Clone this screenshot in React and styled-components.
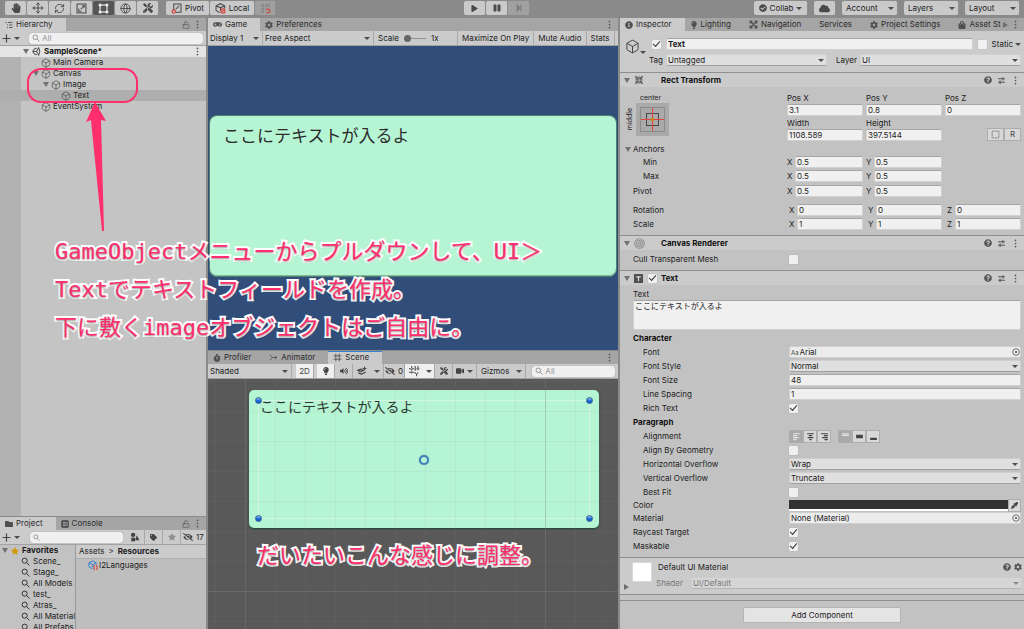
import React, { useId } from "react";
import styled, { createGlobalStyle, css } from "styled-components";
import { Box, Move, LockOpen, Globe, RefreshCw } from "lucide-react";
import {
  FaHandPaper, FaTools, FaPlay, FaPause, FaStepForward, FaCheckCircle, FaCloud,
  FaGamepad, FaCog, FaInfoCircle, FaLightbulb, FaShoppingBag, FaQuestionCircle,
  FaFolder, FaStar, FaTag, FaVolumeUp, FaVideo, FaEyeDropper, FaEyeSlash, FaStopwatch,
} from "react-icons/fa";

const GlobalStyle = createGlobalStyle`
  * { box-sizing: border-box; }
  body { margin: 0; background: #8a8a8a; }
  body, button, input, select, textarea {
    font-family: Inter, "Noto Sans CJK JP", sans-serif;
    font-size: 8px;
    line-height: 11px;
    color: #1c1c1c;
  }
  button, input, select, textarea { margin: 0; padding: 0; border: 0; border-radius: 0; outline: 0; }
  svg { display: block; flex: none; }
`;

/* ---------- icons ---------- */

const Svg = ({ size = 10, children, ...rest }) => (
  <svg width={size} height={size} viewBox="0 0 16 16" fill="none" stroke="currentColor" strokeWidth="1.5" aria-hidden="true" {...rest}>
    {children}
  </svg>
);
const ScaleIcon = () => <Svg size={11}><rect x="1.5" y="1.5" width="13" height="13" /><path d="M4 8v4h4M7 9l5-5M9 4h3v3" /></Svg>;
const RectIcon = () => (
  <Svg size={11}>
    <rect x="3" y="3" width="10" height="10" />
    <g fill="currentColor" stroke="none"><circle cx="3" cy="3" r="2.2" /><circle cx="13" cy="3" r="2.2" /><circle cx="3" cy="13" r="2.2" /><circle cx="13" cy="13" r="2.2" /></g>
  </Svg>
);
const PivotIcon = () => <Svg size={11}><path d="M4 10V1.5h10.500v12H7M7 9l5-5" /><circle cx="4" cy="12.500" r="2.500" stroke="#d0362f" /></Svg>;
const LocalIcon = () => <Svg size={11}><path d="M7 14l-5.500-3V4L8 1l6 3v4M1.500 4L8 7l6-3M8 7v4" /><circle cx="11.500" cy="11.500" r="3" stroke="#d0362f" /><path d="M10 13l3-3" stroke="#d0362f" /></Svg>;
const SnapIcon = () => <Svg size={11}><path d="M1 4h13M1 9h7M4 1v13M9 1v6M13 1v5M1 13h6" strokeDasharray="2 1" /><path d="M9 9h3a2 2 0 010 5H9" stroke="#c0504a" strokeWidth="2" /></Svg>;
const ListIcon = () => <Svg size={8}><path d="M1 3h3M6 3h9M4 8h2M8 8h7M4 13h2M8 13h7" strokeWidth="1.800" /></Svg>;
const UnityIcon = () => <Svg size={9}><path d="M1 8l4-5 4-1M1 8l4 5 4 1M1 8h7M8 8l4-6.500 2 6.500-2 6.500zM14 8l-2-6" strokeWidth="1.800" /></Svg>;
const KebabIcon = () => <Svg size={9}><g fill="currentColor" stroke="none"><circle cx="8" cy="2.500" r="1.500" /><circle cx="8" cy="8" r="1.500" /><circle cx="8" cy="13.500" r="1.500" /></g></Svg>;
const SearchIcon = ({ size = 8 }) => <Svg size={size}><circle cx="6.500" cy="6.500" r="4.500" /><path d="M10 10l5 5" /></Svg>;
const PresetIcon = () => <Svg size={9} strokeWidth="1.900"><path d="M2 5h12M2 11h12M10.500 2v6M5.500 8v6" /></Svg>;
const CrossArrowsIcon = () => (
  <Svg size={10} strokeWidth="1.800">
    <path d="M2 2l4 4M14 2l-4 4M2 14l4-4M14 14l-4-4" />
    <path d="M2.500 6.500h4v-4M9.500 2.500v4h4M2.500 9.500h4v4M13.500 9.500h-4v4" />
  </Svg>
);
const NavIcon = () => <Svg size={9}><path d="M3 3l10 10M13 3L3 13" strokeWidth="2" /><g fill="currentColor" stroke="none"><rect x="1" y="1" width="5" height="5" /><rect x="10" y="1" width="5" height="5" /><rect x="1" y="10" width="5" height="5" /><rect x="10" y="10" width="5" height="5" /></g></Svg>;
const RingsIcon = () => <Svg size={11} stroke="#909090"><circle cx="8" cy="8" r="7" /><circle cx="8" cy="8" r="4.300" /><circle cx="8" cy="8" r="1.700" /></Svg>;
const ConsoleIcon = () => <Svg size={8}><rect x="1" y="1" width="14" height="14" rx="2" fill="currentColor" /><path d="M4 5h6M4 8h5M4 11h6M12 4v8" stroke="#b5b5b5" /></Svg>;
const AnimatorIcon = () => <Svg size={9}><path d="M1 3l5 5-5 5M6 8h8M11 5.500L14 8l-3 2.500" /></Svg>;
const GridIcon = () => <Svg size={9}><path d="M5 1v14M11 1v14M1 5h14M1 11h14" /></Svg>;
const SnapGridIcon = () => <Svg size={11}><path d="M4 0v12M0 4h16M9 0v7M13 0v6M0 9h8M8 9l3 3 3-3M11 12v4" strokeDasharray="3 1" /></Svg>;
const EffectsIcon = () => (
  <Svg size={10}>
    <path d="M1 7l5-2 4 2-4 2zM2 11l5 2 7-3" strokeWidth="2" />
    <path d="M12 1v6M9 4h6" strokeWidth="1.800" />
  </Svg>
);
const ShapesIcon = () => <Svg size={10} fill="currentColor" stroke="none"><circle cx="5" cy="4.500" r="3.500" /><path d="M11 5l4 8H8z" /><rect x="2" y="9" width="6" height="6" /></Svg>;
const TargetIcon = () => <Svg size={8}><circle cx="8" cy="8" r="6.500" /><circle cx="8" cy="8" r="2" fill="currentColor" stroke="none" /></Svg>;
const AssetIcon = () => <Svg size={10}><path d="M7 14l-5.500-3V4.500L7.500 1.500l5.500 3v3M1.500 4.500l6 3 5.500-3M7.500 7.500V12" stroke="#2f80d0" /><path d="M11 9H9.500v6H11M13 9h1.500v6H13" stroke="#d0362f" /></Svg>;
const DashedRectIcon = () => <Svg size={9}><rect x="2" y="2" width="12" height="12" strokeDasharray="2 2" /></Svg>;
const AlignIcon = ({ d }) => <Svg size={9} strokeWidth="2"><path d={d} /></Svg>;
const AnchorIcon = () => (
  <svg width="33" height="33" viewBox="0 0 33 33" fill="none" aria-hidden="true">
    <rect width="33" height="33" fill="#a9a9a9" />
    <rect x="4.500" y="4.500" width="24" height="24" stroke="#8b8b8b" />
    <rect x="10.500" y="10.500" width="12" height="12" stroke="#4a4a4a" />
    <path d="M16.500 5v23M5 16.500h23" stroke="#e0453d" />
    <rect x="15" y="15" width="3" height="3" fill="#c78a1c" />
  </svg>
);

/* ---------- shared controls ---------- */

const Triangle = styled.span`
  display: block;
  flex: none;
  width: 0;
  height: 0;
  border: 3px solid transparent;
  ${(p) => p.$right
    ? css`border-left: 5px solid ${p.$color || "#6e6e6e"}; border-right-width: 0;`
    : css`border-top: ${p.$big ? 5 : 3}px solid ${p.$color || "#4c4c4c"}; border-bottom-width: 0;`}
`;

const TextInput = styled.input`
  display: block;
  flex: 1;
  width: 100%;
  min-width: 0;
  height: 12px;
  padding: 0 1px;
  background: #f0f0f0;
  border-radius: 2px;
  border: 1px solid #d0d0d0;
  border-top-color: #a6a6a6;
  line-height: 10px;
  font-weight: ${(p) => (p.$bold ? 700 : 400)};
`;

const SelectBox = styled.span`
  display: grid;
  flex: 1;
  min-width: 0;
  align-items: center;
  opacity: ${(p) => (p.$faded ? 0.5 : 1)};
  > * { grid-area: 1 / 1; }
  > ${Triangle} { justify-self: end; margin-right: 3px; pointer-events: none; }
`;
const SelectControl = styled.select`
  appearance: none;
  width: 100%;
  height: 12px;
  padding: 0 1px;
  line-height: 10px;
  background: #dfdfdf;
  border: 1px solid #cfcfcf;
  border-bottom-color: #a0a0a0;
  border-radius: 2px;
  opacity: 1;
  ${(p) => p.$flat && css`background: transparent; border-color: transparent;`}
`;
const Select = ({ id, value, label, flat, faded }) => (
  <SelectBox $faded={faded}>
    <SelectControl id={id} aria-label={label} $flat={flat} defaultValue={value}><option>{value}</option></SelectControl>
    <Triangle />
  </SelectBox>
);

const CheckBox = styled.input.attrs({ type: "checkbox" })`
  appearance: none;
  flex: none;
  display: grid;
  place-items: center;
  width: 9px;
  height: 9px;
  background: #f0f0f0;
  border-radius: 1px;
  box-shadow: 0 0 1px #8c8c8c;
  &:checked::before {
    content: "";
    width: 6px;
    height: 3px;
    margin-bottom: 2px;
    border: solid #333;
    border-width: 0 0 1px 1px;
    transform: rotate(-48deg);
  }
`;

const SearchField = styled.label`
  display: flex;
  align-items: center;
  gap: 2px;
  flex: 1;
  min-width: 0;
  height: 11px;
  margin: 0 3px;
  padding: 0 3px;
  background: #f0f0f0;
  border-radius: 3px;
  box-shadow: 0 0 1px #777;
  color: #777;
  input { flex: 1; min-width: 0; background: none; height: 11px; }
  input::placeholder { color: #9a9a9a; }
`;

const IconButton = styled.button`
  display: inline-flex;
  align-items: center;
  justify-content: center;
  gap: 3px;
  flex: none;
  width: ${(p) => (p.$w ? `${p.$w}px` : "auto")};
  height: 14px;
  padding: 0;
  background: ${(p) => (p.$on ? "#efefef" : "transparent")};
  color: ${(p) => (p.$dim ? "#8f8f8f" : "#444")};
  white-space: nowrap;
  ${(p) => p.$line && css`border-right: 1px solid #a9a9a9;`}
`;
const TextButton = styled(IconButton)`
  padding: 0 4px;
  color: #1c1c1c;
`;

/* ---------- window frame ---------- */

const Shell = styled.div`
  position: relative;
  display: flex;
  flex-direction: column;
  min-width: 900px;
  height: 100vh;
  overflow: hidden;
  background: #8a8a8a;
`;
const TopBar = styled.header`
  display: grid;
  grid-template-columns: 464fr auto 494fr;
  align-items: center;
  height: 18px;
  padding-bottom: 2px;
`;
const Group = styled.div`
  display: flex;
  gap: ${(p) => p.$gap || 0}px;
  justify-content: ${(p) => (p.$end ? "flex-end" : "flex-start")};
  padding: ${(p) => p.$pad || 0};
`;
const BarButton = styled(IconButton)`
  background: ${(p) => (p.$active ? "#565656" : p.$dim ? "#a0a0a0" : "#c9c9c9")};
  color: ${(p) => (p.$active ? "#f4f4f4" : p.$dim ? "#7d7d7d" : "#4a4a4a")};
  border-right: 1px solid #8f8f8f;
  border-radius: 2px;
`;
const BarText = styled.span`color: #1c1c1c;`;

const Workspace = styled.main`
  display: grid;
  grid-template-columns: 206px minmax(0, 1fr) 404px;
  gap: 2px;
  flex: 1;
  min-height: 0;
`;
const Column = styled.div`
  display: flex;
  flex-direction: column;
  min-width: 0;
  min-height: 0;
`;
const Panel = styled.section`
  display: flex;
  flex-direction: column;
  flex: ${(p) => p.$flex || "1 1 0"};
  min-height: 0;
  overflow: hidden;
  background: #c2c2c2;
`;
const TabBar = styled.div`
  display: flex;
  flex: none;
  height: 13px;
  background: #a5a5a5;
`;
const Tabs = styled.div`
  display: flex;
  flex: 1;
  min-width: 0;
  overflow: hidden;
`;
const Tab = styled.button`
  display: flex;
  align-items: center;
  gap: 3px;
  flex: none;
  height: 13px;
  padding: 0 13px 0 5px;
  color: #2a2a2a;
  background: ${(p) => (p.$active ? "#cbcbcb" : "transparent")};
  box-shadow: ${(p) => (p.$focus ? "inset 0 1px 0 #3d7fd0" : "none")};
  svg { color: #505050; }
`;
const TabTools = styled.div`
  display: flex;
  align-items: center;
  gap: 3px;
  padding: 0 4px 0 2px;
  color: #555;
`;
const Toolbar = styled.div`
  display: flex;
  align-items: center;
  flex: none;
  height: 15px;
  overflow: hidden;
  background: #cbcbcb;
  border-bottom: 1px solid #a2a2a2;
`;

/* ---------- hierarchy ---------- */

const Tree = styled.ul`
  flex: 1;
  margin: 0;
  padding: 0;
  list-style: none;
  background: linear-gradient(90deg, #b2b2b2 21px, #c4c4c4 21px);
`;
const TreeRow = styled.li`
  display: flex;
  align-items: center;
  gap: ${(p) => (p.$scene ? 3 : 2)}px;
  height: 11px;
  padding: 0 4px 0 ${(p) => p.$depth * 10 + 23}px;
  background: ${(p) => (p.$selected ? "#aeaeae" : p.$scene ? "#e4e4e4" : "transparent")};
  font-weight: ${(p) => (p.$scene ? 700 : 400)};
  color: ${(p) => (p.$scene ? "#111" : "#222")};
  svg { color: #555; }
`;
const Fold = styled.span`
  display: flex;
  flex: none;
  width: 6px;
`;
const Spring = styled.span`flex: 1;`;

/* ---------- project ---------- */

const Browser = styled.div`
  display: grid;
  grid-template-columns: 75px minmax(0, 1fr);
  gap: 1px;
  flex: 1;
  min-height: 0;
  background: #9a9a9a;
`;
const Favorites = styled.ul`
  margin: 0;
  padding: 0;
  list-style: none;
  overflow: hidden;
  background: #c2c2c2;
`;
const FavoriteRow = styled.li`
  display: flex;
  align-items: center;
  gap: 3px;
  height: 11px;
  padding-left: ${(p) => (p.$head ? 2 : 21)}px;
  font-weight: ${(p) => (p.$head ? 700 : 400)};
  white-space: nowrap;
`;
const Contents = styled.div`background: #bebebe;`;
const Crumbs = styled.nav`
  display: flex;
  gap: 4px;
  height: 14px;
  padding: 1px 3px;
  background: #cbcbcb;
  border-bottom: 1px solid #b0b0b0;
  a { color: inherit; text-decoration: none; }
  b { font-weight: 700; }
`;
const AssetRow = styled.div`
  display: flex;
  align-items: center;
  gap: 1px;
  height: 12px;
  padding-left: 12px;
`;

/* ---------- game and scene ---------- */

const ScaleSlider = styled.input.attrs({ type: "range" })`
  appearance: none;
  width: 22px;
  height: 9px;
  margin: 0 5px;
  background: linear-gradient(#909090, #909090) center / 100% 1px no-repeat;
  &::-webkit-slider-thumb {
    appearance: none;
    width: 7px;
    height: 7px;
    border-radius: 50%;
    background: #666;
  }
`;
const Cell = styled.label`
  display: flex;
  align-items: center;
  flex: none;
  width: ${(p) => p.$w}px;
  height: 14px;
  padding-left: ${(p) => p.$pad || 0}px;
  border-right: 1px solid #a9a9a9;
`;
const GameView = styled.div`
  flex: 1;
  padding: 70px 2px 0;
  background: #314d79;
`;
const GameCard = styled.div`
  height: 160px;
  padding: 10px 13px;
  border-radius: 7px;
  background: #b6f5d4;
  box-shadow: 0 0 0 1px #4d806f, inset 0 -1px 0 #7fb79b;
  font-size: 17px;
  line-height: 20px;
  color: #2c2c2c;
`;
const SceneView = styled.div`
  position: relative;
  flex: 1;
  padding: 11px 19px 0 41px;
  background: #595959;
  &::after {
    content: "";
    position: absolute;
    inset: 0;
    pointer-events: none;
    background:
      linear-gradient(90deg, rgba(130, 130, 130, 0.3) 1px, transparent 1px) 37px 0 / 300px 100%,
      linear-gradient(rgba(130, 130, 130, 0.3) 1px, transparent 1px) 0 212px / 100% 300px,
      linear-gradient(90deg, rgba(130, 130, 130, 0.1) 1px, transparent 1px) 7px 0 / 30px 100%,
      linear-gradient(rgba(130, 130, 130, 0.1) 1px, transparent 1px) 0 2px / 100% 30px;
  }
`;
const SceneCard = styled.div`
  position: relative;
  height: 138px;
  padding: 8px 11px;
  border-radius: 5px;
  background: #b6f5d4;
  box-shadow: 0 1px 2px #1f4436;
  font-size: 14px;
  line-height: 18px;
  color: #2b3831;
`;
const RectFrame = styled.div`
  position: absolute;
  inset: 10px 9px 9px 9px;
  border: 1px solid #d6f5e2;
`;
const Handle = styled.i`
  position: absolute;
  width: 7px;
  height: 7px;
  border-radius: 50%;
  border: 1px solid #2f5f94;
  background: linear-gradient(#8fc3f5, #1560d8 60%);
  ${(p) => (p.$bottom ? "bottom: -4px;" : "top: -4px;")}
  ${(p) => (p.$right ? "right: -4px;" : "left: -4px;")}
`;
const PivotRing = styled.i`
  position: absolute;
  top: 50%;
  left: 50%;
  width: 10px;
  height: 10px;
  margin: -5px;
  border-radius: 50%;
  border: 2px solid #3f7dbb;
  box-shadow: 0 0 1px #2f5f94;
`;

/* ---------- inspector ---------- */

const ObjectHeader = styled.div`
  display: grid;
  grid-template-columns: 24px minmax(0, 1fr);
  height: 41px;
  padding: 5px 3px 0 5px;
  background: #cbcbcb;
`;
const ObjectIcon = styled.div`
  display: flex;
  align-items: flex-end;
  height: 18px;
  color: #444;
`;
const HeaderRows = styled.div`
  display: flex;
  flex-direction: column;
`;
const HeaderRow = styled.div`
  display: flex;
  align-items: center;
  gap: ${(p) => p.$gap}px;
  height: 16px;
  padding-left: ${(p) => p.$pad || 0}px;
`;
const Caption = styled.label`
  flex: none;
  opacity: ${(p) => (p.$faded ? 0.5 : 1)};
`;
const ComponentHead = styled.div`
  display: flex;
  align-items: center;
  gap: 4px;
  height: 15px;
  padding: 0 4px;
  background: #cbcbcb;
  border-top: 1px solid #8f8f8f;
  h2 { flex: 1; margin: 0; font-size: 8px; line-height: 11px; font-weight: 700; color: #111; }
`;
const Marks = styled.span`
  display: flex;
  align-items: center;
  gap: 5px;
  width: 23px;
  color: #555;
`;
const HeadTools = styled.span`
  display: flex;
  align-items: center;
  gap: 5px;
  color: #555;
`;
const Body = styled.div`padding: ${(p) => p.$pad}; `;
const TransformTop = styled.div`
  display: grid;
  grid-template-columns: 154px minmax(0, 1fr);
  height: 50px;
`;
const AnchorPreset = styled.div`
  display: grid;
  grid-template-columns: 33px;
  align-content: start;
  margin-left: 1px;
  font-size: 7px;
  line-height: 10px;
  text-align: center;
`;
const AnchorBox = styled.div`
  display: flex;
  align-items: center;
  gap: 1px;
  margin-left: -9px;
`;
const SideText = styled.span`
  writing-mode: vertical-rl;
  transform: rotate(180deg);
`;
const Vectors = styled.div`
  display: grid;
  grid-template-columns: repeat(3, minmax(0, 1fr));
  gap: 0 ${(p) => p.$gap}px;
  flex: 1;
  align-content: start;
`;
const Stacked = styled.label`
  display: block;
  height: 25px;
`;
const Axis = styled.label`
  display: flex;
  align-items: center;
  gap: 2px;
`;
const AxisName = styled.span`flex: none; width: 6px;`;
const SmallButtons = styled.div`
  display: flex;
  justify-content: flex-end;
  align-self: center;
  padding-top: 8px;
`;
const SmallButton = styled.button`
  display: grid;
  place-items: center;
  width: ${(p) => p.$w || 17}px;
  height: 13px;
  background: ${(p) => (p.$on ? "#a9a9a9" : "#d8d8d8")};
  color: ${(p) => (p.$on ? "#e4e4e4" : "#444")};
  border: 1px solid #adadad;
`;
const Row = styled.div`
  display: flex;
  align-items: center;
  height: ${(p) => (p.$tight ? 12 : 14)}px;
  padding-left: ${(p) => (p.$indent ? 10 : 0)}px;
`;
const RowLabel = styled.label`
  flex: none;
  width: ${(p) => p.$w}px;
`;
const Title = styled.h3`
  margin: 0;
  font-size: 8px;
  line-height: 14px;
  font-weight: 700;
  color: #111;
`;
const FoldTitle = styled.div`
  display: flex;
  align-items: center;
  gap: 2px;
  height: 12px;
  margin-left: -8px;
`;
const Gap = styled.div`flex: none; height: ${(p) => p.$h}px;`;
const TextBox = styled.textarea`
  display: block;
  width: 100%;
  height: 30px;
  margin-bottom: 1px;
  padding: 0 1px;
  resize: none;
  background: #f0f0f0;
  border: 1px solid #d0d0d0;
  border-top-color: #a6a6a6;
  border-radius: 2px;
`;
const ObjectField = styled.div`
  display: flex;
  align-items: center;
  gap: 1px;
  flex: 1;
  height: 12px;
  padding: 0 0 0 1px;
  background: #ececec;
  border: 1px solid #cfcfcf;
  border-radius: 2px;
  color: #444;
  small { font-size: 6px; }
  input { flex: 1; min-width: 0; background: none; }
`;
const ColorButton = styled.button`
  flex: 1;
  height: 11px;
  background: #323232;
  border-bottom: 2px solid #fff;
`;
const MaterialHead = styled.div`
  display: grid;
  grid-template-columns: 32px minmax(0, 1fr);
  height: 38px;
  padding: 1px 2px 0 4px;
  background: #cbcbcb;
  border-top: 1px solid #8f8f8f;
  border-bottom: 1px solid #8f8f8f;
`;
const Swatch = styled.div`
  width: 20px;
  height: 20px;
  margin: 3px 0 2px 8px;
  background: #fff;
  border: 1px solid #d9d9d9;
`;
const AddRow = styled.div`
  flex: 1;
  margin-top: 5px;
  padding-top: 6px;
  border-top: 1px solid #8f8f8f;
  text-align: center;
`;
const AddButton = styled.button`
  width: 158px;
  height: 16px;
  background: #e4e4e4;
  border: 1px solid #b4b4b4;
  border-radius: 2px;
`;

/* ---------- annotations ---------- */

const Markup = styled.svg`
  position: absolute;
  top: 66px;
  left: 26px;
  pointer-events: none;
`;
const Note = styled.p`
  position: absolute;
  top: ${(p) => p.$top}px;
  left: ${(p) => p.$left}px;
  margin: 0;
  font-family: "DejaVu Sans Mono", "Noto Sans CJK JP", monospace;
  font-size: 22px;
  font-weight: 400;
  line-height: 38px;
  white-space: nowrap;
  color: #ff2e6c;
  -webkit-text-stroke: 4px #fff;
  paint-order: stroke fill;
  text-shadow: 0 1px 2px rgba(0, 0, 0, 0.45);
  pointer-events: none;
`;

/* ---------- pieces ---------- */

const Cube = ({ size = 10 }) => <Box size={size} strokeWidth={1.8} />;

const TreeItem = ({ depth, open, selected, children }) => (
  <TreeRow $depth={depth} $selected={selected}>
    <Fold>{open && <Triangle $big $color="#707070" />}</Fold>
    <Cube />
    {children}
  </TreeRow>
);

const ComponentTitle = ({ mark, children }) => (
  <ComponentHead>
    <Triangle $big $color="#707070" />
    <Marks>{mark}</Marks>
    <h2>{children}</h2>
    <HeadTools><FaQuestionCircle size={8} /><PresetIcon /><KebabIcon /></HeadTools>
  </ComponentHead>
);

const VectorRow = ({ name, values, indent, wide }) => (
  <Row $indent={indent}>
    <RowLabel as="span" $w={(wide ? 156 : 154) - (indent ? 10 : 0)}>{name}</RowLabel>
    <Vectors $gap={wide ? 5 : 3}>
      {values.map((v, i) => (
        <Axis key={i}><AxisName>{"XYZ"[i]}</AxisName><TextInput defaultValue={v} /></Axis>
      ))}
    </Vectors>
  </Row>
);

const Field = ({ name, indent, type, value }) => {
  const id = useId();
  return (
    <Row $indent={indent} $tight={type === "color"}>
      <RowLabel htmlFor={id} $w={indent ? 146 : 156}>{name}</RowLabel>
      {type === "check" && <CheckBox id={id} defaultChecked={value} />}
      {type === "text" && <TextInput id={id} defaultValue={value} />}
      {type === "select" && <Select id={id} value={value} />}
      {type === "object" && (
        <ObjectField>
          {name === "Font" && <small>Aa</small>}
          <input id={id} defaultValue={value} />
          <TargetIcon />
        </ObjectField>
      )}
      {type === "color" && <><ColorButton id={id} /><SmallButton $w={13} aria-label="Pick color"><FaEyeDropper size={7} /></SmallButton></>}
    </Row>
  );
};

const ALIGN = [
  ["Left", "M2 3h12M2 6.500h7M2 10h10M2 13.500h6"],
  ["Center", "M2 3h12M5 6.500h6M3 10h10M6 13.500h4"],
  ["Right", "M2 3h12M7 6.500h7M4 10h10M8 13.500h6"],
];
const VALIGN = [
  ["Top", "M2 3h12M2 6h12"],
  ["Middle", "M2 6h12M2 8h12M2 10h12"],
  ["Bottom", "M2 11h12M2 13h12"],
];

const TOOLS = [
  ["Hand", <FaHandPaper size={10} />], ["Move", <Move size={12} />], ["Rotate", <RefreshCw size={11} />],
  ["Scale", <ScaleIcon />], ["Rect", <RectIcon />], ["Transform", <Globe size={11} />], ["Custom", <FaTools size={10} />],
];

const WideBarButton = styled(BarButton)`
  justify-content: space-between;
  padding: 0 3px 0 4px;
`;
const SelectBar = ({ w, children }) => <WideBarButton $w={w}><BarText>{children}</BarText><Triangle /></WideBarButton>;

const Top = () => (
  <TopBar>
    <Group $gap={7} $pad="0 0 0 5px">
      <Group>
        {TOOLS.map(([n, icon]) => <BarButton key={n} $w={22} $active={n === "Rect"} aria-label={n}>{icon}</BarButton>)}
      </Group>
      <Group>
        <BarButton $w={44}><PivotIcon /><BarText>Pivot</BarText></BarButton>
        <BarButton $w={45}><LocalIcon /><BarText>Local</BarText></BarButton>
        <BarButton $w={21} $dim aria-label="Snap"><SnapIcon /></BarButton>
      </Group>
    </Group>
    <Group>
      <BarButton $w={22} aria-label="Play"><FaPlay size={7} /></BarButton>
      <BarButton $w={22} aria-label="Pause"><FaPause size={8} /></BarButton>
      <BarButton $w={22} $dim aria-label="Step"><FaStepForward size={8} /></BarButton>
    </Group>
    <Group $gap={6} $end $pad="0 4px 0 0">
      <BarButton $w={54}><FaCheckCircle size={8} /><BarText>Collab</BarText><Triangle /></BarButton>
      <BarButton $w={22} aria-label="Cloud"><FaCloud size={11} /></BarButton>
      <SelectBar w={56}>Account</SelectBar>
      <SelectBar w={55}>Layers</SelectBar>
      <SelectBar w={55}>Layout</SelectBar>
    </Group>
  </TopBar>
);

const AddMenu = () => <IconButton $w={22} aria-label="Create"><Svg size={9} strokeWidth="2"><path d="M8 1v14M1 8h14" /></Svg><Triangle /></IconButton>;

const Hierarchy = () => (
  <Panel>
    <TabBar>
      <Tabs><Tab $active><ListIcon />Hierarchy</Tab></Tabs>
      <TabTools><LockOpen size={8} /><KebabIcon /></TabTools>
    </TabBar>
    <Toolbar>
      <AddMenu />
      <Group $pad="0 0 0 4px" />
      <SearchField><SearchIcon /><input placeholder="All" aria-label="Search hierarchy" /></SearchField>
    </Toolbar>
    <Tree>
      <TreeRow $depth={0} $scene>
        <Triangle $big $color="#707070" /><UnityIcon />SampleScene*<Spring /><KebabIcon />
      </TreeRow>
      <TreeItem depth={1}>Main Camera</TreeItem>
      <TreeItem depth={1} open>Canvas</TreeItem>
      <TreeItem depth={2} open>Image</TreeItem>
      <TreeItem depth={3} selected>Text</TreeItem>
      <TreeItem depth={1}>EventSystem</TreeItem>
    </Tree>
  </Panel>
);

const Project = () => (
  <Panel $flex="0 0 112px">
    <TabBar>
      <Tabs>
        <Tab $active><FaFolder size={8} />Project</Tab>
        <Tab><ConsoleIcon />Console</Tab>
      </Tabs>
      <TabTools><LockOpen size={8} /><KebabIcon /></TabTools>
    </TabBar>
    <Toolbar>
      <AddMenu />
      <Group $pad="0 0 0 5px" />
      <SearchField><SearchIcon size={7} /><input aria-label="Search project" /></SearchField>
      <IconButton $w={19} $line aria-label="By type"><ShapesIcon /></IconButton>
      <IconButton $w={18} $line aria-label="By label"><FaTag size={7} /></IconButton>
      <IconButton $w={18} $line $dim aria-label="Favorite"><FaStar size={8} /></IconButton>
      <IconButton $w={25}><FaEyeSlash size={10} /><BarText>17</BarText></IconButton>
    </Toolbar>
    <Browser>
      <Favorites>
        <FavoriteRow $head><Triangle $big $color="#707070" /><FaStar size={8} color="#d39b12" />Favorites</FavoriteRow>
        {["Scene_", "Stage_", "All Models", "test_", "Atras_", "All Materials", "All Prefabs"].map((n) => (
          <FavoriteRow key={n}><SearchIcon size={9} />{n}</FavoriteRow>
        ))}
      </Favorites>
      <Contents>
        <Crumbs><a href="#assets">Assets</a><span>&gt;</span><b>Resources</b></Crumbs>
        <AssetRow><AssetIcon />I2Languages</AssetRow>
      </Contents>
    </Browser>
  </Panel>
);

const Game = () => (
  <Panel $flex="333 1 0">
    <TabBar>
      <Tabs>
        <Tab $active><FaGamepad size={9} />Game</Tab>
        <Tab><FaCog size={8} />Preferences</Tab>
      </Tabs>
      <TabTools><KebabIcon /></TabTools>
    </TabBar>
    <Toolbar>
      <Cell $w={55}><Select label="Display" value="Display 1" flat /></Cell>
      <Cell $w={111}><Select label="Aspect" value="Free Aspect" flat /></Cell>
      <Cell $w={84} $pad={4}>Scale<ScaleSlider defaultValue={0} />1x</Cell>
      <TextButton $line>Maximize On Play</TextButton>
      <TextButton $line>Mute Audio</TextButton>
      <TextButton $line>Stats</TextButton>
      <TextButton>Gizmos</TextButton>
    </Toolbar>
    <GameView><GameCard>ここにテキストが入るよ</GameCard></GameView>
  </Panel>
);

const Scene = () => (
  <Panel $flex="278 1 0">
    <TabBar>
      <Tabs>
        <Tab><FaStopwatch size={8} />Profiler</Tab>
        <Tab><AnimatorIcon />Animator</Tab>
        <Tab $active $focus><GridIcon />Scene</Tab>
      </Tabs>
      <TabTools><KebabIcon /></TabTools>
    </TabBar>
    <Toolbar>
      <Cell $w={84}><Select label="Draw mode" value="Shaded" flat /></Cell>
      <Group $pad="0 0 0 4px" />
      <IconButton $w={18} $line $on>2D</IconButton>
      <Group $pad="0 0 0 3px" />
      <IconButton $w={18} $line $on aria-label="Lighting"><FaLightbulb size={8} /></IconButton>
      <IconButton $w={18} $line aria-label="Audio"><FaVolumeUp size={8} /></IconButton>
      <IconButton $w={17} aria-label="Effects"><EffectsIcon /></IconButton>
      <IconButton $w={14} $line aria-label="Effects menu"><Triangle /></IconButton>
      <IconButton $w={21} $line><FaEyeSlash size={10} /><BarText>0</BarText></IconButton>
      <IconButton $w={18} $on aria-label="Grid"><SnapGridIcon /></IconButton>
      <IconButton $w={12} $line $on aria-label="Grid menu"><Triangle /></IconButton>
      <IconButton $w={18} $line aria-label="Tools"><FaTools size={8} /></IconButton>
      <IconButton $w={24} $line aria-label="Camera"><FaVideo size={8} /><Triangle /></IconButton>
      <TextButton>Gizmos</TextButton>
      <IconButton $w={13} $line aria-label="Gizmos menu"><Triangle /></IconButton>
      <Group $pad="0 0 0 3px" />
      <SearchField><SearchIcon /><input placeholder="All" aria-label="Search scene" /></SearchField>
    </Toolbar>
    <SceneView>
      <SceneCard>
        ここにテキストが入るよ
        <RectFrame>
          <Handle /><Handle $right /><Handle $bottom /><Handle $bottom $right />
          <PivotRing />
        </RectFrame>
      </SceneCard>
    </SceneView>
  </Panel>
);

const Inspector = () => (
  <Panel>
    <TabBar>
      <Tabs>
        <Tab $active><FaInfoCircle size={8} />Inspector</Tab>
        <Tab><FaLightbulb size={8} />Lighting</Tab>
        <Tab><NavIcon />Navigation</Tab>
        <Tab>Services</Tab>
        <Tab><FaCog size={8} />Project Settings</Tab>
        <Tab><FaShoppingBag size={8} />Asset Store</Tab>
      </Tabs>
      <TabTools><Triangle $right /><KebabIcon /></TabTools>
    </TabBar>
    <ObjectHeader>
      <ObjectIcon><Box size={15} strokeWidth={1.6} /><Triangle /></ObjectIcon>
      <HeaderRows>
        <HeaderRow $gap={5} $pad={3}>
          <CheckBox defaultChecked aria-label="Active" />
          <TextInput $bold defaultValue="Text" aria-label="Object name" />
          <Axis><CheckBox />&nbsp;Static<Triangle /></Axis>
        </HeaderRow>
        <HeaderRow $gap={3}>
          <Caption htmlFor="tag">Tag</Caption><Select id="tag" value="Untagged" />
          <Group $pad="0 0 0 3px" /><Caption htmlFor="layer">Layer</Caption><Select id="layer" value="UI" />
        </HeaderRow>
      </HeaderRows>
    </ObjectHeader>

    <ComponentTitle mark={<CrossArrowsIcon />}>Rect Transform</ComponentTitle>
    <Body $pad="6px 3px 4px 13px">
      <TransformTop>
        <AnchorPreset>
          <span>center</span>
          <AnchorBox><SideText>middle</SideText><AnchorIcon /></AnchorBox>
        </AnchorPreset>
        <Vectors $gap={3}>
          <Stacked>Pos X<TextInput defaultValue="3.1" /></Stacked>
          <Stacked>Pos Y<TextInput defaultValue="0.8" /></Stacked>
          <Stacked>Pos Z<TextInput defaultValue="0" /></Stacked>
          <Stacked>Width<TextInput defaultValue="1108.589" /></Stacked>
          <Stacked>Height<TextInput defaultValue="397.5144" /></Stacked>
          <SmallButtons>
            <SmallButton aria-label="Blueprint mode"><DashedRectIcon /></SmallButton>
            <SmallButton>R</SmallButton>
          </SmallButtons>
        </Vectors>
      </TransformTop>
      <FoldTitle><Triangle $big $color="#707070" />Anchors</FoldTitle>
      <VectorRow name="Min" indent values={["0.5", "0.5"]} />
      <VectorRow name="Max" indent values={["0.5", "0.5"]} />
      <Gap $h={1} />
      <VectorRow name="Pivot" values={["0.5", "0.5"]} />
      <Gap $h={5} />
      <VectorRow name="Rotation" wide values={["0", "0", "0"]} />
      <VectorRow name="Scale" wide values={["1", "1", "1"]} />
    </Body>

    <ComponentTitle mark={<RingsIcon />}>Canvas Renderer</ComponentTitle>
    <Body $pad="2px 3px 4px 13px">
      <Field name="Cull Transparent Mesh" type="check" value={false} />
    </Body>

    <ComponentTitle
      mark={<>
        <Svg size={9} stroke="none"><rect width="16" height="16" rx="1" fill="#505050" /><path d="M4 4h8v2H9v7H7V6H4z" fill="#ddd" /></Svg>
        <CheckBox defaultChecked aria-label="Text enabled" />
      </>}
    >Text</ComponentTitle>
    <Body $pad="4px 3px 4px 13px">
      <label htmlFor="body-text">Text</label>
      <TextBox id="body-text" defaultValue="ここにテキストが入るよ" />
      <Title>Character</Title>
      <Field name="Font" indent type="object" value="Arial" />
      <Field name="Font Style" indent type="select" value="Normal" />
      <Field name="Font Size" indent type="text" value="48" />
      <Field name="Line Spacing" indent type="text" value="1" />
      <Field name="Rich Text" indent type="check" value />
      <Title>Paragraph</Title>
      <Row $indent>
        <RowLabel as="span" $w={146}>Alignment</RowLabel>
        <Group $gap={7}>
          <Group>{ALIGN.map(([n, d], i) => <SmallButton key={n} $w={14} $on={i === 0} aria-label={n}><AlignIcon d={d} /></SmallButton>)}</Group>
          <Group>{VALIGN.map(([n, d], i) => <SmallButton key={n} $w={14} $on={i === 0} aria-label={n}><AlignIcon d={d} /></SmallButton>)}</Group>
        </Group>
      </Row>
      <Field name="Align By Geometry" indent type="check" value={false} />
      <Field name="Horizontal Overflow" indent type="select" value="Wrap" />
      <Field name="Vertical Overflow" indent type="select" value="Truncate" />
      <Field name="Best Fit" indent type="check" value={false} />
      <Field name="Color" type="color" />
      <Field name="Material" type="object" value="None (Material)" />
      <Field name="Raycast Target" type="check" value />
      <Field name="Maskable" type="check" value />
    </Body>

    <MaterialHead>
      <div><Swatch /><Triangle $right /></div>
      <HeaderRows>
        <HeaderRow $gap={3} $pad={2}>Default UI Material<Spring /><FaQuestionCircle size={8} color="#555" /><FaCog size={8} color="#555" /></HeaderRow>
        <HeaderRow $gap={8}><Caption $faded htmlFor="shader">Shader</Caption><Select id="shader" value="UI/Default" faded /></HeaderRow>
      </HeaderRows>
    </MaterialHead>
    <AddRow><AddButton>Add Component</AddButton></AddRow>
  </Panel>
);

export default function App() {
  return (
    <Shell>
      <GlobalStyle />
      <Top />
      <Workspace>
        <Column><Hierarchy /><Gap $h={1} /><Project /></Column>
        <Column><Game /><Gap $h={1} /><Scene /></Column>
        <Column><Inspector /></Column>
      </Workspace>
      <Markup width="114" height="168" viewBox="0 0 114 168" aria-hidden="true">
        <rect x="2" y="3" width="109" height="33" rx="13" fill="none" stroke="#ff2e6c" strokeWidth="2" />
        <path d="M69 36L80 55L75 54L78 165L76 165L65 54L60 56Z" fill="#ff2e6c" />
      </Markup>
      <Note $top={233} $left={55}>
        GameObjectメニューからプルダウンして、UI＞<br />
        Textでテキストフィールドを作成。<br />
        下に敷くimageオブジェクトはご自由に。
      </Note>
      <Note $top={537} $left={257}>だいたいこんな感じに調整。</Note>
    </Shell>
  );
}
